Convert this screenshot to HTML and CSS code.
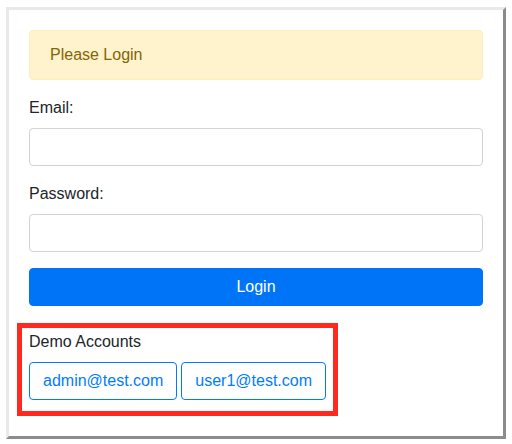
FILE: index.html
```html
<!DOCTYPE html>
<html lang="en">
<head>
<meta charset="utf-8">
<title>Login</title>
<link rel="stylesheet" href="styles.css">
</head>
<body>
<div class="frame">
  <div class="alert">Please Login</div>
  <form class="form">
    <div class="group">
      <label class="label" for="email">Email:</label>
      <input class="control" id="email" type="email">
    </div>
    <div class="group">
      <label class="label" for="password">Password:</label>
      <input class="control" id="password" type="password">
    </div>
    <button type="button" class="btn-primary">Login</button>
  </form>
  <div class="highlight">
    <div class="demo">
      <div class="demo-title">Demo Accounts</div>
      <div class="demo-buttons">
        <button type="button" class="btn-outline">admin@test.com</button>
        <button type="button" class="btn-outline">user1@test.com</button>
      </div>
    </div>
  </div>
</div>
</body>
</html>
```

FILE: styles.css
```css
* { box-sizing: border-box; }
html, body { margin: 0; padding: 0; background: #fff; }
body {
  font-family: "Liberation Sans", Arial, sans-serif;
  font-size: 16px;
  line-height: 24px;
  color: #212529;
  padding: 7px 6px 0 6px;
}
.frame {
  width: 500px;
  height: 432px;
  border-style: solid;
  border-width: 3px;
  border-color: #e9e9e9 #8c8c8c #8c8c8c #e9e9e9;
  padding: 20px 20px 20px 20px;
}
.alert {
  height: 50px;
  padding: 12px 20px;
  background: #fff3cd;
  border: 1px solid #ffeeba;
  border-radius: 4px;
  color: #856404;
  margin-bottom: 16px;
}
.form { margin: 0; }
.group { margin-bottom: 16px; }
.label {
  display: block;
  margin-bottom: 8px;
  height: 24px;
}
.control {
  display: block;
  width: 100%;
  height: 38px;
  border: 1px solid #ced4da;
  border-radius: 4px;
  padding: 6px 12px;
  font: inherit;
  background: #fff;
}
.btn-primary {
  display: block;
  width: 100%;
  height: 38px;
  background: #0074f7;
  border: 1px solid #0074f7;
  border-radius: 4px;
  color: #fff;
  font: inherit;
  padding: 6px 12px;
}
.highlight {
  display: inline-block;
  margin: 17px 0 0 -12px;
  border: 5px solid #ff2a1f;
  padding: 2px 7px 11px 7px;
}
.demo-title {
  margin-bottom: 8px;
}
.demo-buttons {
  display: flex;
  gap: 4px;
}
.btn-outline {
  height: 38px;
  padding: 6px 13px;
  border: 1px solid #007bff;
  border-radius: 4px;
  background: #fff;
  color: #007bff;
  font: inherit;
  line-height: 24px;
}
```
